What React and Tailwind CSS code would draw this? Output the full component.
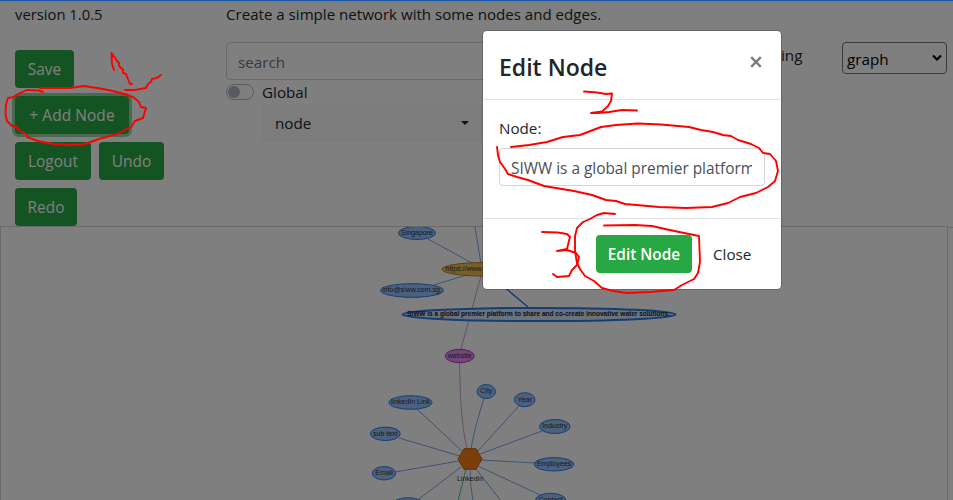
import React from "react";

const BLUE_NODES = [
  { x: 417, y: 233, rx: 18.5, ry: 6.5, label: "Singapore" },
  { x: 412, y: 290.5, rx: 31.5, ry: 6.8, label: "info@siww.com.sg." },
  { x: 410.5, y: 402.5, rx: 21.5, ry: 6.8, label: "linkedIn Link" },
  { x: 385.3, y: 433.8, rx: 15, ry: 6.7, label: "sub text" },
  { x: 384, y: 473.3, rx: 11.7, ry: 6.7, label: "Email" },
  { x: 486.3, y: 391.5, rx: 9.2, ry: 7, label: "City" },
  { x: 524.7, y: 399.7, rx: 10.3, ry: 7, label: "Year" },
  { x: 554.8, y: 426.5, rx: 15.3, ry: 7, label: "Industry" },
  { x: 554, y: 464.3, rx: 19.8, ry: 6.7, label: "Employees" },
  { x: 550.7, y: 500, rx: 15, ry: 6.7, label: "Contact" },
  { x: 408, y: 504.5, rx: 16, ry: 6.7, label: "" },
];

function Graph() {
  return (
    <svg className="block h-[273px] w-[946px]" viewBox="1 227 946 273" fontFamily="Liberation Sans, sans-serif" fontSize="7">
      <g fill="none" stroke="#7fa6e0" strokeWidth="1">
        <path d="M428 239L474 264M434 285L466 275M475 227L481 264" />
        <path d="M417 409L463 452M399 438L460 456M395 472L459 461M419 499L461 467" />
        <path d="M484 398Q474 430 471 449M519 406L477 452M542 431L480 454M535 463L481 460M540 495L478 466M476 469L501 501M470 470Q470 485 473 501" />
      </g>
      <path d="M481 276L461 349M459.5 362C460 390 461 425 467 448" fill="none" stroke="#c9a3d0" />
      <path d="M466 469L458 501" stroke="#5fb59b" />
      <path d="M490 275L528 307" stroke="#2b7ce9" strokeWidth="1.5" />
      <ellipse cx="481" cy="269.3" rx="39" ry="6.7" fill="#eebc4f" stroke="#b98320" />
      <text x="445.5" y="271.3" fontSize="7" fill="#343434">https://www.siww.com.sg</text>
      <ellipse cx="539" cy="314.5" rx="136.5" ry="6.6" fill="#d2e5ff" stroke="#2b7ce9" strokeWidth="2" />
      <text x="407" y="316.2" fontWeight="bold" textLength="263" lengthAdjust="spacingAndGlyphs" fill="#222">
        SIWW is a global premier platform to share and co-create innovative water solutions.
      </text>
      <ellipse cx="459.7" cy="356" rx="14.5" ry="6.7" fill="#e98af5" stroke="#a344b0" />
      <text x="459.7" y="358.2" textAnchor="middle" fill="#343434">website</text>
      {BLUE_NODES.map((n) => (
        <g key={n.label + n.x}>
          <ellipse cx={n.x} cy={n.y} rx={n.rx} ry={n.ry} fill="#97c2fc" stroke="#2b7ce9" />
          <text x={n.x} y={n.y + 1.8} textAnchor="middle" fill="#343434">{n.label}</text>
        </g>
      ))}
      <path d="M458 459L464 448.7H476L482 459L476 469.3H464Z" fill="#fb7e14" stroke="#c95d08" />
      <text x="470" y="481" textAnchor="middle" fill="#343434">Linkedin</text>
    </svg>
  );
}

function GreenButton({ className = "", children }) {
  return (
    <button className={`h-[38px] shrink-0 whitespace-nowrap rounded bg-[#28a745] pt-[2px] text-center text-[15.4px] text-white ${className}`}>
      {children}
    </button>
  );
}

function EditModal() {
  return (
    <div className="absolute left-[483px] top-[31px] flex h-[258px] w-[298px] flex-col rounded bg-white shadow-[0_0_0_1px_rgba(0,0,0,0.2)]">
      <div className="flex h-[69px] shrink-0 items-start justify-between border-b border-[#dee2e6] pl-4 pr-[19px] pt-[18px]">
        <h5 className="whitespace-nowrap text-[23px] font-semibold leading-[37px]">Edit Node</h5>
        <svg className="mt-[7px] h-3 w-3" viewBox="0 0 12 12" fill="none" stroke="#7f7f7f" strokeWidth="2.4">
          <path d="M1.2 1.2L10.8 10.8M10.8 1.2L1.2 10.8" />
        </svg>
      </div>
      <div className="flex h-[119px] shrink-0 flex-col border-b border-[#dee2e6] px-4 pt-4">
        <label className="h-8 text-[15.2px] leading-6">Node:</label>
        <div className="h-[38px] rounded border border-[#ced4da] pl-[11px] pr-3 text-[#495057]">
          <div className="overflow-hidden whitespace-nowrap text-[15.4px] leading-[39px]">SIWW is a global premier platform to share</div>
        </div>
      </div>
      <div className="flex items-center gap-[21px] pl-[113px] pt-[16px]">
        <GreenButton className="w-24 text-[14.7px] font-semibold">Edit Node</GreenButton>
        <span className="text-[15.2px]">Close</span>
      </div>
    </div>
  );
}

function Annotations() {
  return (
    <svg className="pointer-events-none absolute inset-0 h-[500px] w-[953px]" viewBox="0 0 953 500" fill="none" stroke="#f00" strokeWidth="1.9" strokeLinecap="round" strokeLinejoin="round">
      <path d="M114 70L112 64L111.5 53L117 61L119 63V66L123 70V73L126 74L128 79L130 84L132 84M125 90L135 90L146 88L148 84L151 82L152 79L157 78L161 75" />
      <path d="M43 92L39 90.5L27 90L20 93L14 97L8 98L6 105L5.5 114L7 121L12 126L16 127L20 131L26 134L27 137L38 141L53 144L70 145L85 144L99 139L117 134L131 127L135 121L143 118L146 108L141 107L139 102L133 97L121 93L108 90L97 88L84 86L70 88H40" />
      <path d="M584 91.5L597 92.5L606 94L612 93.5L611 101L608 106L602 111.5L591 113M591 113H598L609 112L622 110L637 110.5" />
      <path d="M511 147L529 145L547 142L563 137L580 135L601 127L616 125L638 123.5L661 124.5L689 127L701 130L713 132L723 135L731 136L738 140L751 144L759 148L763 153L770 154L776 161L778 171L775 181L768 187L756 193L740 197L728 203L712 207L686 208L659 207L625 204L616 201L606 200L592 195L574 191L544 186L528 180L517 177L508 174L505 169L500 162L498 155L497 147" />
      <path d="M542 232L558 232.5L567 234L570 237L567 249L557 251L567 250L576 253L579 257L577 265L572 270L569 276L557 277L553 274" />
      <path d="M615 214L604 213L597 215L590 219L583 222L577 228L575 236L575 251L577 263L580 269L585 276L594 281L602 288L613 291L627 293L650 292L674 290L682 285L694 279L698 273L700 262L699 236L694 235L684 233L665 229L652 226L635 225L604 225.5" />
    </svg>
  );
}

export default function App() {
  return (
    <div className="relative h-[500px] w-[953px] overflow-hidden bg-white font-['Open_Sans','Noto_Sans',sans-serif] text-[15.2px] text-[#212529]">
      <div className="flex h-[226px]">
        <aside className="w-[226px] shrink-0 pl-[15px] pt-[2px]">
          <p className="text-[14.8px] leading-6">version 1.0.5</p>
          <div className="mt-[24px] flex w-[180px] flex-wrap gap-2">
            <GreenButton className="w-[59px]">Save</GreenButton>
            <div className="h-0 basis-[100px]" />
            <GreenButton className="w-[114px] ring-[3px] ring-[#28a745]/50">
              <span className="tracking-[0.1px]">+ Add Node</span>
            </GreenButton>
            <GreenButton className="w-[76px]">Logout</GreenButton>
            <GreenButton className="w-[65px]">Undo</GreenButton>
            <GreenButton className="w-[62px]">Redo</GreenButton>
          </div>
        </aside>
        <main className="w-[540px] shrink-0 pt-[2px]">
          <p className="whitespace-nowrap text-[15.1px] leading-6">Create a simple network with some nodes and edges.</p>
          <div className="mt-[16px] h-[38px] w-[500px] rounded border border-[#ced4da] px-[11px] leading-[39px] text-[#6c757d]">search</div>
          <div className="flex h-6 items-center gap-2">
            <span className="flex h-4 w-7 items-center rounded-full border border-[#adb5bd] pl-[1px]">
              <span className="h-3 w-3 rounded-full bg-[#adb5bd]" />
            </span>
            <span>Global</span>
          </div>
          <div className="ml-9 flex h-[38px] w-[220px] items-center justify-between rounded bg-[#f8f9fa] pl-[13px] pr-[13px]">
            <span>node</span>
            <span className="border-x-[4.5px] border-t-[4.5px] border-x-transparent border-t-[#212529]" />
          </div>
        </main>
        <div className="flex w-[181px] items-start pt-[42px]">
          <span className="w-[76px] pl-[15px] leading-[26px]">ing</span>
          <div className="flex h-8 w-[105px] items-center justify-between rounded-sm border border-[#767676] pl-1 pr-1 text-black">
            <span className="pt-[2px]">graph</span>
            <svg className="h-2 w-[10px]" viewBox="0 0 10 8" fill="none" stroke="#000" strokeWidth="2.2">
              <path d="M1 1.5L5 5.5L9 1.5" />
            </svg>
          </div>
        </div>
      </div>
      <div className="flex h-[274px]">
        <div className="w-[948px] border-l border-r border-t border-[#d3d3d3]">
          <Graph />
        </div>
        <div className="mt-px flex-1 border-t border-[#d3d3d3]" />
      </div>
      <div className="absolute inset-0 bg-black/50" />
      <div className="absolute inset-x-0 top-0 h-[2px] border-b border-[#5f7fa6] bg-[#1857a5]" />
      <EditModal />
      <Annotations />
    </div>
  );
}
